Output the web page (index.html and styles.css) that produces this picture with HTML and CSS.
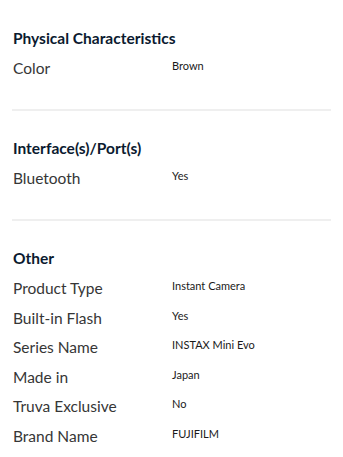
FILE: index.html
```html
<!DOCTYPE html>
<html lang="en">
<head>
<meta charset="utf-8">
<link rel="stylesheet" href="styles.css">
</head>
<body>
<div class="specs">
  <section class="group">
    <h2 class="group-title">Physical Characteristics</h2>
    <div class="rows">
      <div class="row"><span class="label">Color</span><span class="value">Brown</span></div>
    </div>
  </section>
  <hr class="divider">
  <section class="group">
    <h2 class="group-title">Interface(s)/Port(s)</h2>
    <div class="rows">
      <div class="row"><span class="label">Bluetooth</span><span class="value">Yes</span></div>
    </div>
  </section>
  <hr class="divider">
  <section class="group">
    <h2 class="group-title">Other</h2>
    <div class="rows">
      <div class="row"><span class="label">Product Type</span><span class="value">Instant Camera</span></div>
      <div class="row"><span class="label">Built-in Flash</span><span class="value">Yes</span></div>
      <div class="row"><span class="label">Series Name</span><span class="value">INSTAX Mini Evo</span></div>
      <div class="row"><span class="label">Made in</span><span class="value">Japan</span></div>
      <div class="row"><span class="label">Truva Exclusive</span><span class="value">No</span></div>
      <div class="row"><span class="label">Brand Name</span><span class="value">FUJIFILM</span></div>
    </div>
  </section>
</div>
</body>
</html>
```
FILE: styles.css
```css
html, body {
  margin: 0;
  padding: 0;
  background: #ffffff;
}
body {
  font-family: Lato, "Open Sans", sans-serif;
}
.specs {
  padding: 26px 12px 0 13px;
}
.group {
  display: flex;
  flex-direction: column;
  gap: 6px;
}
.group-title {
  margin: 0;
  font-size: 15.5px;
  line-height: 24px;
  font-weight: 700;
  color: #0b1a2f;
}
.rows {
  display: flex;
  flex-direction: column;
  gap: 5.6px;
}
.row {
  display: grid;
  grid-template-columns: 1fr 1fr;
  align-items: start;
}
.label {
  font-size: 15.5px;
  line-height: 24px;
  color: #363636;
}
.value {
  font-size: 11px;
  line-height: 20px;
  color: #1a1a1a;
}
.divider {
  border: 0;
  height: 2px;
  background: #efefef;
  margin: 29px 0 25px -1px;
}
```
